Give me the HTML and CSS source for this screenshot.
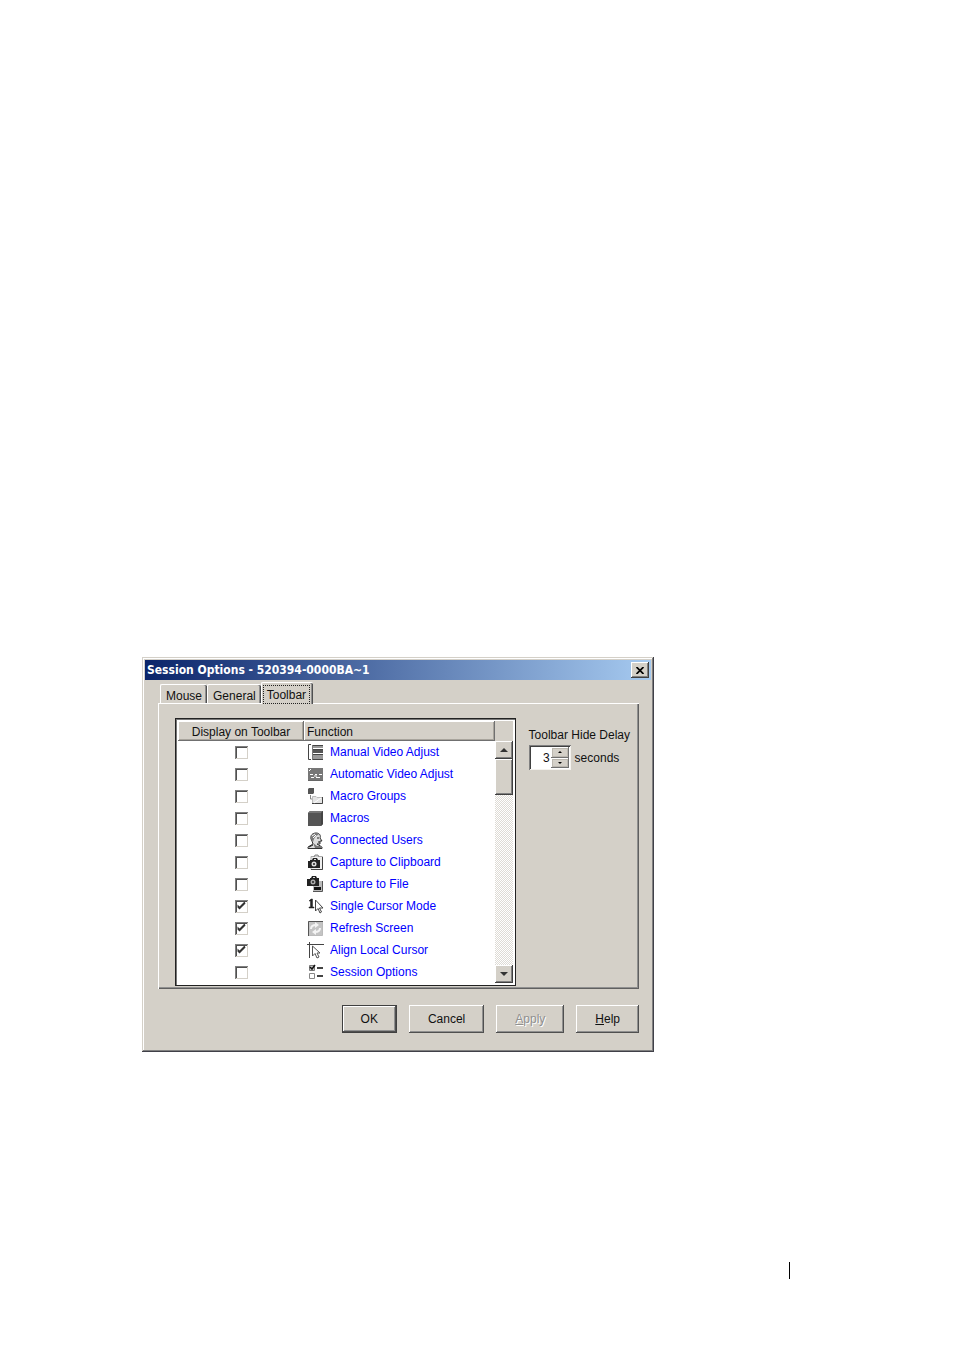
FILE: index.html
```
<!DOCTYPE html>
<html lang="en">
<head>
  <meta charset="UTF-8">
  <title>Session Options</title>
  <meta name="viewport" content="width=device-width, initial-scale=1">
  <link rel="stylesheet" href="styles.css">
</head>
<body>
  <main class="page">
    <form class="dialog" onsubmit="return false">
      <div class="titlebar">
        <h1>Session Options - 520394-0000BA~1</h1>
        <button type="button" class="close" aria-label="Close">
          <svg width="8" height="7" viewBox="0 0 8 7"><path d="M.5 0l7 7M7.500 0l-7 7" stroke="#000" stroke-width="1.700"/></svg>
        </button>
      </div>

      <div class="content">
        <div class="tabs" role="tablist">
          <button type="button" class="tab" role="tab">Mouse</button>
          <button type="button" class="tab" role="tab">General</button>
          <button type="button" class="tab active" role="tab" aria-selected="true"><span>Toolbar</span></button>
        </div>

        <div class="panel">
          <div class="list">
            <table>
              <thead>
                <tr><th class="col-display">Display on Toolbar</th><th class="col-function">Function</th></tr>
              </thead>
              <tbody>
                <tr>
                  <td><input type="checkbox" id="f1"></td>
                  <td><label for="f1">
                    <svg class="icon" viewBox="0 0 17 17"><path d="M4 .5H1.500V15.500H4" fill="none" stroke="#444"/><path d="M5 1h11v3H5zM5 11h11v4H5z" fill="#999"/><path d="M5 1.500h11M5 5.500h11M5 10.500h11M5 15.500h11" stroke="#444"/><path d="M5 6h11v3H5z" fill="#555"/><path d="M5.500 1v15" stroke="#777"/></svg>
                    Manual Video Adjust</label></td>
                </tr>
                <tr>
                  <td><input type="checkbox" id="f2"></td>
                  <td><label for="f2">
                    <svg class="icon" viewBox="0 0 17 17"><path d="M1 2h15v13H1z" fill="#777"/><path d="M2 5l2-2M3 8.500h3M8 8.500h2M12 8.500h3M4 11.500h3M9 11.500h4M7 10h3" stroke="#fff"/><path d="M1 14.500h15" stroke="#666"/></svg>
                    Automatic Video Adjust</label></td>
                </tr>
                <tr>
                  <td><input type="checkbox" id="f3"></td>
                  <td><label for="f3">
                    <svg class="icon" viewBox="0 0 17 17"><path d="M1 1l1-1h5v5L6 6H1z" fill="#555"/><path d="M3.500 7v4H5" fill="none" stroke="#888"/><path d="M5.500 15.500v-7H9l1 1h5.500v6z" fill="#e4e4e4" stroke="#bbb"/><path d="M5 15.500h10.500V9" fill="none" stroke="#444"/><path d="M7 15l7-5" stroke="#fff"/></svg>
                    Macro Groups</label></td>
                </tr>
                <tr>
                  <td><input type="checkbox" id="f4"></td>
                  <td><label for="f4">
                    <svg class="icon" viewBox="0 0 17 17"><path d="M1 3l2-2h13v13l-2 2H1z" fill="#555"/><path d="M1 3l2-2h13l-2 2z" fill="#777"/><path d="M14 3l2-2v13l-2 2z" fill="#444"/></svg>
                    Macros</label></td>
                </tr>
                <tr>
                  <td><input type="checkbox" id="f5"></td>
                  <td><label for="f5">
                    <svg class="icon" viewBox="0 0 17 17"><path d="M4 7c-1-4 2-6 5-6 4 0 5 3 4 5l2 3h-2v3h-3l5 3v1.500H1V15l5-3-1-3z" fill="#ddd" stroke="#333"/><path d="M4 6c0-4 4-6 8-3-3 0-4 2-5 4l-1 3zM6 11l4 3h5v2H8z" fill="#777"/><path d="M10 6h2M11 10h2M2 15l4-2" stroke="#222"/><path d="M5 4l3-2M6 6l3-3" stroke="#fff"/></svg>
                    Connected Users</label></td>
                </tr>
                <tr>
                  <td><input type="checkbox" id="f6"></td>
                  <td><label for="f6">
                    <svg class="icon" viewBox="0 0 17 17"><path d="M4 2.500h11.500v13H4z" fill="#eee" stroke="#aaa"/><path d="M15.500 3v12.500H4" fill="none" stroke="#444"/><path d="M7 3l1-2h3l1 2" fill="#ccc" stroke="#888"/><path d="M1 7h2V6h2l1-2h4l1 2h2v8H1z" fill="#222"/><circle cx="7" cy="10" r="2.500" fill="#ddd"/><circle cx="7" cy="10" r="1" fill="#222"/><path d="M7 5.500h2" stroke="#ddd"/></svg>
                    Capture to Clipboard</label></td>
                </tr>
                <tr>
                  <td><input type="checkbox" id="f7"></td>
                  <td><label for="f7">
                    <svg class="icon" viewBox="0 0 17 17"><path d="M6 5h9v10H6z" fill="#bbb"/><path d="M15.500 5v10.500H6" fill="none" stroke="#555"/><path d="M7 11h7v3H7z" fill="#111"/><path d="M0 3h3V2h1l1-2h4l1 2h2v8H0z" fill="#222"/><circle cx="6" cy="6" r="2.500" fill="#aaa"/><circle cx="6" cy="6" r="1" fill="#222"/><path d="M6 1.500h2" stroke="#ddd"/></svg>
                    Capture to File</label></td>
                </tr>
                <tr>
                  <td><input type="checkbox" id="f8" checked></td>
                  <td><label for="f8">
                    <svg class="icon" viewBox="0 0 17 17"><path d="M2 3l2-2h1.500v8H7v1H2V9h1.500V3z" fill="#222" stroke="#222" stroke-width=".5"/><path d="M8.500 2v11l2.500-2.500 2 4.500 1.500-1-2-4H16z" fill="#fff" stroke="#444"/></svg>
                    Single Cursor Mode</label></td>
                </tr>
                <tr>
                  <td><input type="checkbox" id="f9" checked></td>
                  <td><label for="f9">
                    <svg class="icon" viewBox="0 0 17 17"><path d="M1.500 1.500h14v14h-14z" fill="#c4c4c4" stroke="#bbb"/><path d="M1.500 16V1.500H16" fill="none" stroke="#555"/><path d="M4 9c0-3 2-4 5-4M13 8c0 3-2 4-5 4" fill="none" stroke="#f4f4f4" stroke-width="2"/><path d="M8 2l4 3-4 3zM9 9v6l-4-3z" fill="#f4f4f4"/></svg>
                    Refresh Screen</label></td>
                </tr>
                <tr>
                  <td><input type="checkbox" id="f10" checked></td>
                  <td><label for="f10">
                    <svg class="icon" viewBox="0 0 17 17"><path d="M0 2.500h17M2.500 0v16" stroke="#444"/><path d="M5.500 4v10L8 11.500l2 4.500 2-1-2-4h3z" fill="#fff" stroke="#555"/></svg>
                    Align Local Cursor</label></td>
                </tr>
                <tr>
                  <td><input type="checkbox" id="f11"></td>
                  <td><label for="f11">
                    <svg class="icon" viewBox="0 0 17 17"><path d="M2.500 1.500h5v5h-5z" fill="#ccc" stroke="#777"/><path d="M2.500 9.500h5v5h-5z" fill="#fff" stroke="#888"/><path d="M3 3l2 2 3-4" fill="none" stroke="#111" stroke-width="1.500"/><path d="M10 4h6M10 12h6" stroke="#444" stroke-width="2"/></svg>
                    Session Options</label></td>
                </tr>
              </tbody>
            </table>
            <div class="scrollbar">
              <button type="button" aria-label="Scroll up"><svg width="8" height="4" viewBox="0 0 8 4"><path d="M0 4l4-4 4 4z" fill="#333"/></svg></button>
              <div class="thumb"></div>
              <div class="track"></div>
              <button type="button" aria-label="Scroll down"><svg width="8" height="4" viewBox="0 0 8 4"><path d="M0 0l4 4 4-4z" fill="#333"/></svg></button>
            </div>
          </div>

          <div class="delay">
            <label for="delay">Toolbar Hide Delay</label>
            <div class="delay-row">
              <div class="spinner">
                <input type="number" id="delay" value="3" min="1">
                <div class="steps">
                  <button type="button" aria-label="Increase"><svg width="4" height="2" viewBox="0 0 4 2"><path d="M0 2l2-2 2 2z"/></svg></button>
                  <button type="button" aria-label="Decrease"><svg width="4" height="2" viewBox="0 0 4 2"><path d="M0 0l2 2 2-2z"/></svg></button>
                </div>
              </div>
              <span>seconds</span>
            </div>
          </div>
        </div>

        <div class="buttons">
          <button type="submit" class="btn default">OK</button>
          <button type="button" class="btn">Cancel</button>
          <button type="button" class="btn" disabled><u>A</u>pply</button>
          <button type="button" class="btn"><u>H</u>elp</button>
        </div>
      </div>
    </form>

    <footer class="page-mark"></footer>
  </main>
</body>
</html>
```
FILE: styles.css
```
* {
  box-sizing: border-box;
}

body {
  margin: 0;
  background: #fff;
}

body, input, button {
  font-family: "Liberation Sans", Arial, sans-serif;
  font-size: 12px;
  line-height: 14px;
  color: #111;
}

button {
  margin: 0;
  padding: 0;
  border: 0;
  background: #d4d0c8;
}

.page {
  display: flex;
  flex-direction: column;
  min-height: 100vh;
  padding: 0 164px 72px 142px;
}

.dialog {
  width: 100%;
  max-width: 512px;
  margin-top: auto;
  padding: 3px;
  background: #d4d0c8;
  box-shadow: inset -1px -1px #404048, inset 1px 1px #d4d0c8, inset -2px -2px #808080, inset 2px 2px #fff;
}

.titlebar {
  display: flex;
  align-items: center;
  justify-content: space-between;
  height: 20px;
  padding: 0 2px;
  background: linear-gradient(to right, #0a246a, #a6caf0);
}

.titlebar h1 {
  margin: 0;
  font-family: "DejaVu Sans Condensed", "DejaVu Sans", sans-serif;
  font-stretch: condensed;
  font-size: 12px;
  line-height: 14px;
  color: #fff;
  white-space: nowrap;
}

.close {
  display: flex;
  align-items: center;
  justify-content: center;
  width: 18px;
  height: 16px;
  box-shadow: inset -1px -1px #404040, inset 1px 1px #fff, inset -2px -2px #808080;
}

.content {
  padding: 2px 12px 16px 13px;
}

.tabs {
  display: flex;
  align-items: flex-end;
  padding-left: 2px;
}

.tab {
  height: 19px;
  padding: 3px 5px 0;
  border: solid #fff;
  border-width: 1px 0 0 1px;
  border-radius: 2px 2px 0 0;
  box-shadow: inset -1px 0 #505050, inset -2px 0 #909090;
}

.tab.active {
  position: relative;
  height: 22px;
  margin-bottom: -1px;
  padding: 1px 3px 0 1px;
}

.tab.active span {
  display: block;
  height: 19px;
  padding: 2px 3px;
  border: 1px dotted #222;
}

.panel {
  display: flex;
  gap: 13px;
  padding: 14px 9px 3px 16px;
  border: solid;
  border-width: 1px 0 0 1px;
  border-color: #fff;
  box-shadow: inset -1px -1px #606060, inset -2px -2px #909090;
}

.list {
  display: flex;
  flex: 1;
  padding: 3px;
  background: #fff;
  box-shadow: inset 0 0 0 1px #222, inset 2px 2px #777;
}

table {
  flex: 1;
  border-collapse: collapse;
  table-layout: fixed;
}

th {
  height: 20px;
  padding: 2px 3px 0;
  background: #d4d0c8;
  box-shadow: inset -1px -1px #707070, inset 1px 1px #fff, inset -2px -2px #a8a49c;
  font-weight: normal;
}

.col-display {
  width: 126px;
}

.col-function {
  text-align: left;
}

td {
  height: 22px;
  padding: 0 3px;
}

td:first-child {
  text-align: center;
}

td label {
  display: flex;
  align-items: center;
  gap: 6px;
  color: #00f;
  white-space: nowrap;
}

.icon {
  width: 17px;
  height: 17px;
}

input[type="checkbox"] {
  display: block;
  appearance: none;
  width: 13px;
  height: 13px;
  margin: 0 auto;
  background: #fff;
  box-shadow: inset 1px 1px #808080, inset -1px -1px #d4d0c8, inset 2px 2px #505050;
}

input[type="checkbox"]:checked::before {
  content: "";
  display: block;
  width: 13px;
  height: 13px;
  background: #333;
  clip-path: polygon(3px 5px, 5px 7px, 10px 2px, 11px 4px, 5px 10px, 3px 8px);
}

.scrollbar {
  display: flex;
  flex-direction: column;
  width: 18px;
  padding-top: 20px;
  background: linear-gradient(#d4d0c8, #d4d0c8) top / 100% 20px no-repeat;
}

.scrollbar button,
.steps button {
  display: flex;
  align-items: center;
  justify-content: center;
}

.scrollbar button {
  height: 18px;
}

.scrollbar button,
.thumb {
  background: #d4d0c8;
  box-shadow: inset -1px -1px #404040, inset 1px 1px #fff, inset -2px -2px #808080;
}

.thumb {
  height: 36px;
}

.track {
  flex: 1;
  background: repeating-conic-gradient(#dedbd5 0 25%, #fff 0 50%) 0 0 / 2px 2px;
}

.delay {
  padding-top: 10px;
  white-space: nowrap;
}

.delay-row {
  display: flex;
  align-items: center;
  gap: 4px;
  margin-top: 3px;
}

.spinner {
  display: flex;
  width: 42px;
  height: 25px;
  padding: 2px;
  background: #fff;
  box-shadow: inset 1px 1px #808080, inset -1px -1px #f4f2ee, inset 2px 2px #404040;
}

.spinner input {
  flex: 1;
  min-width: 0;
  padding: 0 1px 0 0;
  border: 0;
  background: none;
  text-align: right;
  appearance: textfield;
}

.spinner input::-webkit-inner-spin-button {
  display: none;
}

.steps {
  display: flex;
  flex-direction: column;
  width: 18px;
}

.steps button {
  flex: 1;
  box-shadow: inset -1px -1px #707070, inset 1px 1px #fff, inset 0 0 0 2px #bbb7af;
}

.buttons {
  display: flex;
  justify-content: flex-end;
  gap: 12px;
  margin-top: 16px;
}

.btn {
  height: 28px;
  padding: 0 19px;
  box-shadow: inset -1px -1px #505050, inset 1px 1px #fff, inset -2px -2px #909090;
}

.btn.default {
  box-shadow: inset 0 0 0 1px #404040, inset -2px -2px #505050, inset 2px 2px #fff, inset -3px -3px #909090;
}

.btn:disabled {
  color: #909090;
  text-shadow: 1px 1px #fff;
}

.page-mark {
  height: 17px;
  margin-top: 210px;
  border-right: 1px solid #000;
}

@media (max-width: 820px) {
  .page {
    padding-left: 16px;
    padding-right: 16px;
  }
}
```
